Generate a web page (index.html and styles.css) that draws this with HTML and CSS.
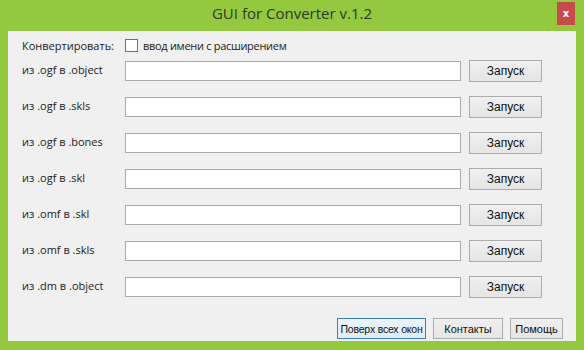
FILE: index.html
```html
<!DOCTYPE html>
<html lang="ru">
<head>
    <meta charset="UTF-8">
    <title>GUI for Converter v.1.2</title>
    <link rel="stylesheet" href="styles.css">
</head>
<body>
    <div class="window">
        <div class="titlebar">
            <span class="title">GUI for Converter v.1.2</span>
            <span class="close">x</span>
        </div>
        <div class="client">
            <div class="options">
                <span class="label">Конвертировать:</span>
                <span class="check"></span>
                <span class="check-text">ввод имени с расширением</span>
            </div>
            <div class="rows">
                <div class="row"><span class="label">из .ogf в .object</span><span class="field"></span><span class="btn">Запуск</span></div>
                <div class="row"><span class="label">из .ogf в .skls</span><span class="field"></span><span class="btn">Запуск</span></div>
                <div class="row"><span class="label">из .ogf в .bones</span><span class="field"></span><span class="btn">Запуск</span></div>
                <div class="row"><span class="label">из .ogf в .skl</span><span class="field"></span><span class="btn">Запуск</span></div>
                <div class="row"><span class="label">из .omf в .skl</span><span class="field"></span><span class="btn">Запуск</span></div>
                <div class="row"><span class="label">из .omf в .skls</span><span class="field"></span><span class="btn">Запуск</span></div>
                <div class="row"><span class="label">из .dm в .object</span><span class="field"></span><span class="btn">Запуск</span></div>
            </div>
            <div class="footer">
                <span class="small-btn default">Поверх всех окон</span>
                <span class="small-btn contacts">Контакты</span>
                <span class="small-btn help">Помощь</span>
            </div>
        </div>
    </div>
</body>
</html>
```

FILE: styles.css
```css
body {
    margin: 0;
    padding: 0;
    background-color: #93c83f;
    font-family: "Liberation Sans", Arial, sans-serif;
}
.window {
    width: 584px;
    height: 350px;
    background-color: #93c83f;
    box-sizing: border-box;
}
.titlebar {
    position: relative;
    height: 31px;
    display: flex;
    align-items: center;
    justify-content: center;
}
.title {
    font-family: "Open Sans", sans-serif;
    font-size: 15px;
    color: #2e3a1f;
    margin-top: -5px;
}
.close {
    position: absolute;
    top: 2px;
    right: 9px;
    width: 18px;
    height: 23px;
    background-color: #c84a4d;
    color: #fff;
    font-family: "DejaVu Sans", sans-serif;
    font-weight: bold;
    font-size: 10px;
    display: flex;
    align-items: center;
    justify-content: center;
}
.client {
    margin: 0 8px;
    height: 310px;
    background-color: #f0f0f0;
    box-sizing: border-box;
    padding: 6px 13px 0 14px;
    display: flex;
    flex-direction: column;
}
.options {
    display: flex;
    align-items: center;
    height: 16px;
}
.options .label {
    padding-bottom: 0;
}
.label {
    width: 103px;
    padding-bottom: 4px;
    font-family: "Open Sans", sans-serif;
    font-size: 11px;
    color: #222;
}
.check {
    width: 11px;
    height: 11px;
    border: 1px solid #707070;
    background: #fff;
}
.check-text {
    margin-left: 5px;
    font-family: "Open Sans", sans-serif;
    font-size: 11px;
    letter-spacing: -0.3px;
    color: #222;
}
.rows {
    display: flex;
    flex-direction: column;
    gap: 14px;
    margin-top: 7px;
}
.row {
    display: flex;
    align-items: center;
    height: 22px;
}
.field {
    width: 334px;
    height: 18px;
    border: 1px solid #ababab;
    background: #fff;
}
.btn {
    margin-left: 8px;
    width: 71px;
    height: 20px;
    border: 1px solid #acacac;
    background: linear-gradient(#f0f0f0, #e5e5e5);
    font-size: 12px;
    color: #111;
    display: flex;
    align-items: center;
    justify-content: center;
}
.footer {
    display: flex;
    justify-content: flex-end;
    gap: 7px;
    margin-top: 20px;
}
.small-btn {
    height: 19px;
    border: 1px solid #acacac;
    background: linear-gradient(#f0f0f0, #e5e5e5);
    font-size: 11px;
    color: #111;
    white-space: nowrap;
    display: flex;
    align-items: center;
    justify-content: center;
}
.small-btn.default {
    width: 87px;
    font-size: 10.5px;
    letter-spacing: -0.2px;
    border-color: #3c7fb1;
    background: linear-gradient(#ecf4fc, #dcecfc);
}
.small-btn.contacts {
    width: 68px;
}
.small-btn.help {
    width: 51px;
}
```
